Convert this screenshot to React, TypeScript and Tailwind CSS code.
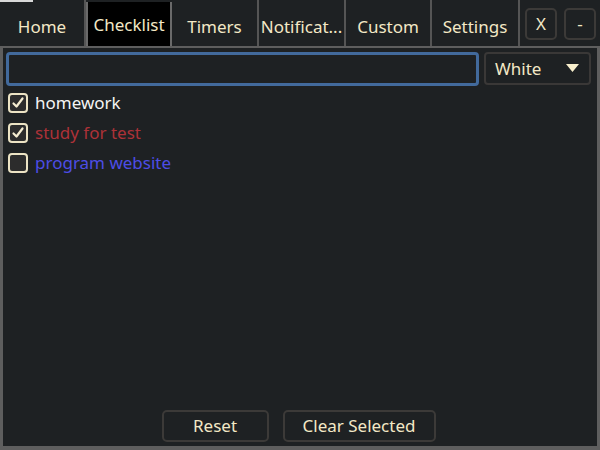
import { useState } from 'react';

const tabs = [
  { label: 'Home', w: 'w-[86px]' },
  { label: 'Checklist', w: 'w-[86px]' },
  { label: 'Timers', w: 'w-[87px]' },
  { label: 'Notificat...', w: 'w-[87px]' },
  { label: 'Custom', w: 'w-[86px]' },
  { label: 'Settings', w: 'w-[88px]' },
];

const items = [
  { label: 'homework', color: 'text-[#f4f4f4]', done: true },
  { label: 'study for test', color: 'text-[#ad3238]', done: true },
  { label: 'program website', color: 'text-[#4d4de6]', done: false },
];

const CheckBox = ({ checked }: { checked: boolean }) => (
  <div className="flex h-[20px] w-[20px] shrink-0 items-center justify-center rounded-[4px] border-2 border-[#ece3c4] bg-[#2c2c2c]">
    {checked && (
      <svg width="14" height="14" viewBox="0 0 14 14" fill="none">
        <path d="M2.5 7.5 L5.5 10.5 L11.5 2.5" stroke="#f4ecd0" strokeWidth="2.2" strokeLinecap="round" strokeLinejoin="round" />
      </svg>
    )}
  </div>
);

const App = () => {
  const [active] = useState('Checklist');

  return (
    <div className="relative flex h-[450px] w-[600px] flex-col bg-[#1e2123] font-['Noto_Sans',sans-serif] text-[#f3e8c6]">
      <div className="absolute left-0 top-0 h-[2px] w-[33px] bg-[#d8d8d8]" />

      {/* Tab bar */}
      <div className="flex h-[46px] items-stretch">
        {tabs.map((t) => (
          <div
            key={t.label}
            className={
              t.label === active
                ? `mt-[2px] flex ${t.w} items-start justify-center border-x-2 border-[#6a6a6a] bg-black pt-[10px] text-[17px]`
                : `flex ${t.w} items-center justify-center border-r-2 border-[#555] pt-[7px] text-[17px]`
            }
          >
            <span className="whitespace-nowrap">{t.label}</span>
          </div>
        ))}
        <div className="flex items-center gap-[7px] pl-[5px] pt-[2px]">
          <button className="flex h-[32px] w-[32px] items-center justify-center rounded-[5px] border-2 border-[#3c3a38] text-[17px]">
            X
          </button>
          <button className="flex h-[32px] w-[32px] items-center justify-center rounded-[5px] border-2 border-[#3c3a38] text-[17px]">
            -
          </button>
        </div>
      </div>

      {/* Panel */}
      <div className="flex flex-1 flex-col border-x-[3px] border-b-[4px] border-t-2 border-[#5e5e5e] pb-[2px] pl-[3px] pr-[6px]">
        <div className="flex gap-[5px] pt-[4px]">
          <div className="h-[34px] flex-1 rounded-[4px] border-[3px] border-[#426a9c]" />
          <div className="flex h-[33px] w-[107px] items-center justify-between rounded-[4px] border-2 border-[#3a3837] pl-[9px] pr-[10px] text-[17px]">
            <span>White</span>
            <svg width="13" height="9" viewBox="0 0 13 9">
              <path d="M0 0 H13 L6.5 8 Z" fill="#f8efcc" />
            </svg>
          </div>
        </div>

        <div className="mt-[7px] flex flex-col gap-[10px] pl-[2px]">
          {items.map((it) => (
            <div key={it.label} className="flex h-[20px] items-center gap-[7px]">
              <CheckBox checked={it.done} />
              <span className={`text-[17px] ${it.color}`}>{it.label}</span>
            </div>
          ))}
        </div>

        <div className="mt-auto flex justify-center gap-[14px] pb-[2px]">
          <button className="h-[32px] w-[107px] rounded-[5px] border-2 border-[#3c3a38] text-[17px]">Reset</button>
          <button className="h-[32px] w-[153px] rounded-[5px] border-2 border-[#3c3a38] text-[17px]">Clear Selected</button>
        </div>
      </div>
    </div>
  );
};

export default App;
